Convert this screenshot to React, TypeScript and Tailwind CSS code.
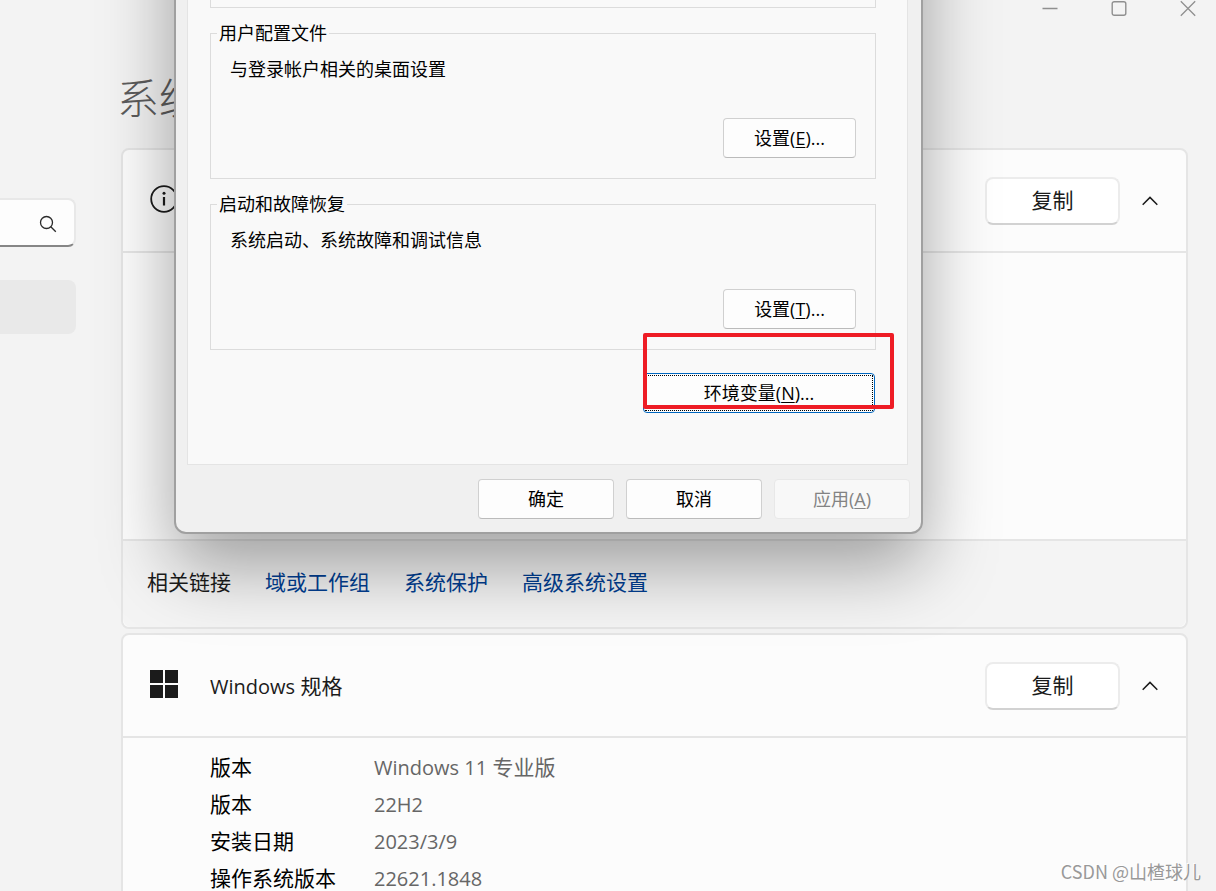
import type { ReactNode } from "react";

const specs = [
  { label: "版本", value: "Windows 11", suffix: " 专业版" },
  { label: "版本", value: "22H2" },
  { label: "安装日期", value: "2023/3/9" },
  { label: "操作系统版本", value: "22621.1848" },
];

const links = ["域或工作组", "系统保护", "高级系统设置"];

function CaptionButtons() {
  return (
    <header className="flex h-[17px] justify-end gap-[13px] text-[#8f8f8f]">
      <button type="button" aria-label="最小化" className="flex w-14 justify-center">
        <svg width="16" height="17" viewBox="0 0 16 17" fill="none" stroke="currentColor">
          <path d="M0.5 8.5h15" strokeWidth="1.5" />
        </svg>
      </button>
      <button type="button" aria-label="最大化" className="flex w-14 justify-center">
        <svg width="16" height="17" viewBox="0 0 16 17" fill="none" stroke="currentColor">
          <rect x="1.2" y="1.7" width="13.6" height="13.6" rx="2" strokeWidth="1.4" />
        </svg>
      </button>
      <button type="button" aria-label="关闭" className="flex w-14 justify-center">
        <svg width="16" height="17" viewBox="0 0 16 17" fill="none" stroke="currentColor">
          <path d="M0.8 1.3l14.4 14.4M15.2 1.3L0.8 15.7" strokeWidth="1.3" />
        </svg>
      </button>
    </header>
  );
}

function Sidebar() {
  return (
    <aside className="w-[76px] shrink-0 pt-[181px]">
      <label className="flex h-[49px] items-center rounded-r-lg border-2 border-l-0 border-[#e8e8e8] border-b-[#868686] bg-[#fdfdfd] pt-0.5 pr-[17px]">
        <input type="text" aria-label="查找设置" className="min-w-0 flex-1 outline-none" />
        <svg width="18" height="18" viewBox="0 0 18 18" fill="none" stroke="#2a2a2a" strokeWidth="1.3">
          <circle cx="7.5" cy="7.5" r="6" />
          <path d="M11.8 11.8l5 5" />
        </svg>
      </label>
      <nav className="mt-[33px]">
        <a href="#system" aria-label="系统" className="block h-[54px] rounded-r-lg bg-[#e9e9e9]" />
      </nav>
    </aside>
  );
}

function CardHeader({ icon, title }: { icon: ReactNode; title?: ReactNode }) {
  return (
    <div className="flex h-[103px] items-center border-b-2 border-[#e5e5e5] pr-5 pl-[27px]">
      <span className="mb-1">{icon}</span>
      <h2 className="ml-8 flex-1 pt-0.5">{title}</h2>
      <button
        type="button"
        className="h-12 w-[135px] rounded-lg border-2 border-[#ececec] border-b-[#d2d2d2] bg-white"
      >
        复制
      </button>
      <button type="button" aria-label="折叠" className="ml-[14px] flex w-8 justify-center">
        <svg width="16" height="10" viewBox="0 0 16 10" fill="none" stroke="#1b1b1b" strokeWidth="1.5">
          <path d="M0.7 8.7L8 1.4l7.3 7.3" />
        </svg>
      </button>
    </div>
  );
}

function GroupBox({ title, text, hotkey }: { title: string; text: string; hotkey: string }) {
  return (
    <fieldset className="mt-[13px] flex h-[158px] flex-col border border-[#dcdcdc] px-[19px] pb-5">
      <legend className="-ml-[13px] px-0.5">{title}</legend>
      <p className="pt-3">{text}</p>
      <DialogButton className="mt-auto w-[133px] self-end">
        设置(<u className="underline-offset-2">{hotkey}</u>)...
      </DialogButton>
    </fieldset>
  );
}

function DialogButton({ className, children }: { className: string; children: ReactNode }) {
  return (
    <button
      type="button"
      className={`h-10 rounded border border-[#d0d0d0] border-b-[#bbbbbb] bg-[#fdfdfd] ${className}`}
    >
      {children}
    </button>
  );
}

function PropertiesDialog() {
  return (
    <div
      role="dialog"
      aria-label="系统属性"
      className="absolute -top-44 left-[174px] w-[749px] rounded-xl border-2 border-[#a0a0a0] bg-[#f0f0f0] pb-[13px] text-lg leading-6 text-black shadow-[0_32px_72px_rgba(0,0,0,0.36)]"
    >
      <div className="mt-[60px] mr-[13px] ml-[11px] border border-[#e4e4e4] bg-[#f9f9f9] pt-5 pr-[31px] pb-[51px] pl-[22px]">
        <div className="h-[101px] border border-[#dcdcdc]" />
        <GroupBox title="用户配置文件" text="与登录帐户相关的桌面设置" hotkey="E" />
        <GroupBox title="启动和故障恢复" text="系统启动、系统故障和调试信息" hotkey="T" />
        <div className="relative mt-[23px] ml-auto w-[233px]">
          <button type="button" className="h-10 w-[232px] rounded border border-[#0067c0] bg-[#fdfdfd] p-px">
            <span className="flex h-full items-center justify-center border border-dotted border-black">
              环境变量(<u className="underline-offset-2">N</u>)...
            </span>
          </button>
          <div className="absolute -top-10 left-0 h-[76px] w-[251px] rounded-xs border-4 border-[#ee1c25]" />
        </div>
      </div>
      <div className="mt-[14px] mr-[11px] flex justify-end gap-3">
        <DialogButton className="w-[136px]">确定</DialogButton>
        <DialogButton className="w-[136px]">取消</DialogButton>
        <button
          type="button"
          disabled
          className="h-10 w-[136px] rounded border border-[#e8e8e8] bg-[#f8f8f8] text-[#838383]"
        >
          应用(<u className="underline-offset-2">A</u>)
        </button>
      </div>
    </div>
  );
}

export default function App() {
  return (
    <div className="relative h-screen overflow-hidden bg-[#f3f3f3] font-['Open_Sans','Noto_Sans_CJK_SC',sans-serif] text-[21px] leading-[37px] text-[#1b1b1b]">
      <CaptionButtons />
      <div className="flex">
        <Sidebar />
        <main className="ml-[45px] min-w-0 flex-1 pt-[53px] pr-7">
          <h1 className="-ml-1 text-[42px] leading-[56px] font-light text-[#5c5c5c]">系统</h1>

          <section className="mt-[22px] rounded-lg border-2 border-[#e5e5e5] bg-[#fcfcfc]">
            <CardHeader
              icon={
                <svg width="28" height="28" viewBox="0 0 28 28" fill="none" stroke="#1b1b1b" strokeWidth="1.8">
                  <circle cx="14" cy="14" r="12.8" />
                  <path d="M14 12v8.5" strokeWidth="2.2" />
                  <circle cx="14" cy="8.3" r="1.5" fill="#1b1b1b" stroke="none" />
                </svg>
              }
            />
            <div className="h-[286px]" />
            <div className="flex h-22 items-center gap-[34px] rounded-b-lg border-t-2 border-[#e5e5e5] bg-[#f4f4f4] pb-1 pl-6">
              <h3>相关链接</h3>
              {links.map((link) => (
                <a key={link} href="#link" className="text-[#003e92]">
                  {link}
                </a>
              ))}
            </div>
          </section>

          <section className="mt-1 rounded-lg border-2 border-[#e5e5e5] bg-[#fcfcfc]">
            <CardHeader
              icon={
                <svg width="28" height="28" viewBox="0 0 28 28" fill="#1b1b1b">
                  <path d="M0 0h13v13H0zM15 0h13v13H15zM0 15h13v13H0zM15 15h13v13H15z" />
                </svg>
              }
              title={
                <>
                  <span className="text-[20px]">Windows</span> 规格
                </>
              }
            />
            <dl className="grid grid-cols-[164px_1fr] pt-[11px] pb-6 pl-[87px]">
              {specs.map((spec) => (
                <div key={spec.label + spec.value} className="contents">
                  <dt className="text-black">{spec.label}</dt>
                  <dd className="text-[#666666]">
                    <span className="text-[20px]">{spec.value}</span>
                    {spec.suffix}
                  </dd>
                </div>
              ))}
            </dl>
          </section>
        </main>
      </div>

      <PropertiesDialog />
      <p className="absolute right-[15px] bottom-2 font-['Noto_Sans_CJK_SC',sans-serif] text-lg leading-6 text-[#999999] text-shadow-[-1px_-1px_0_#ffffff]">
        CSDN @山楂球儿
      </p>
    </div>
  );
}
